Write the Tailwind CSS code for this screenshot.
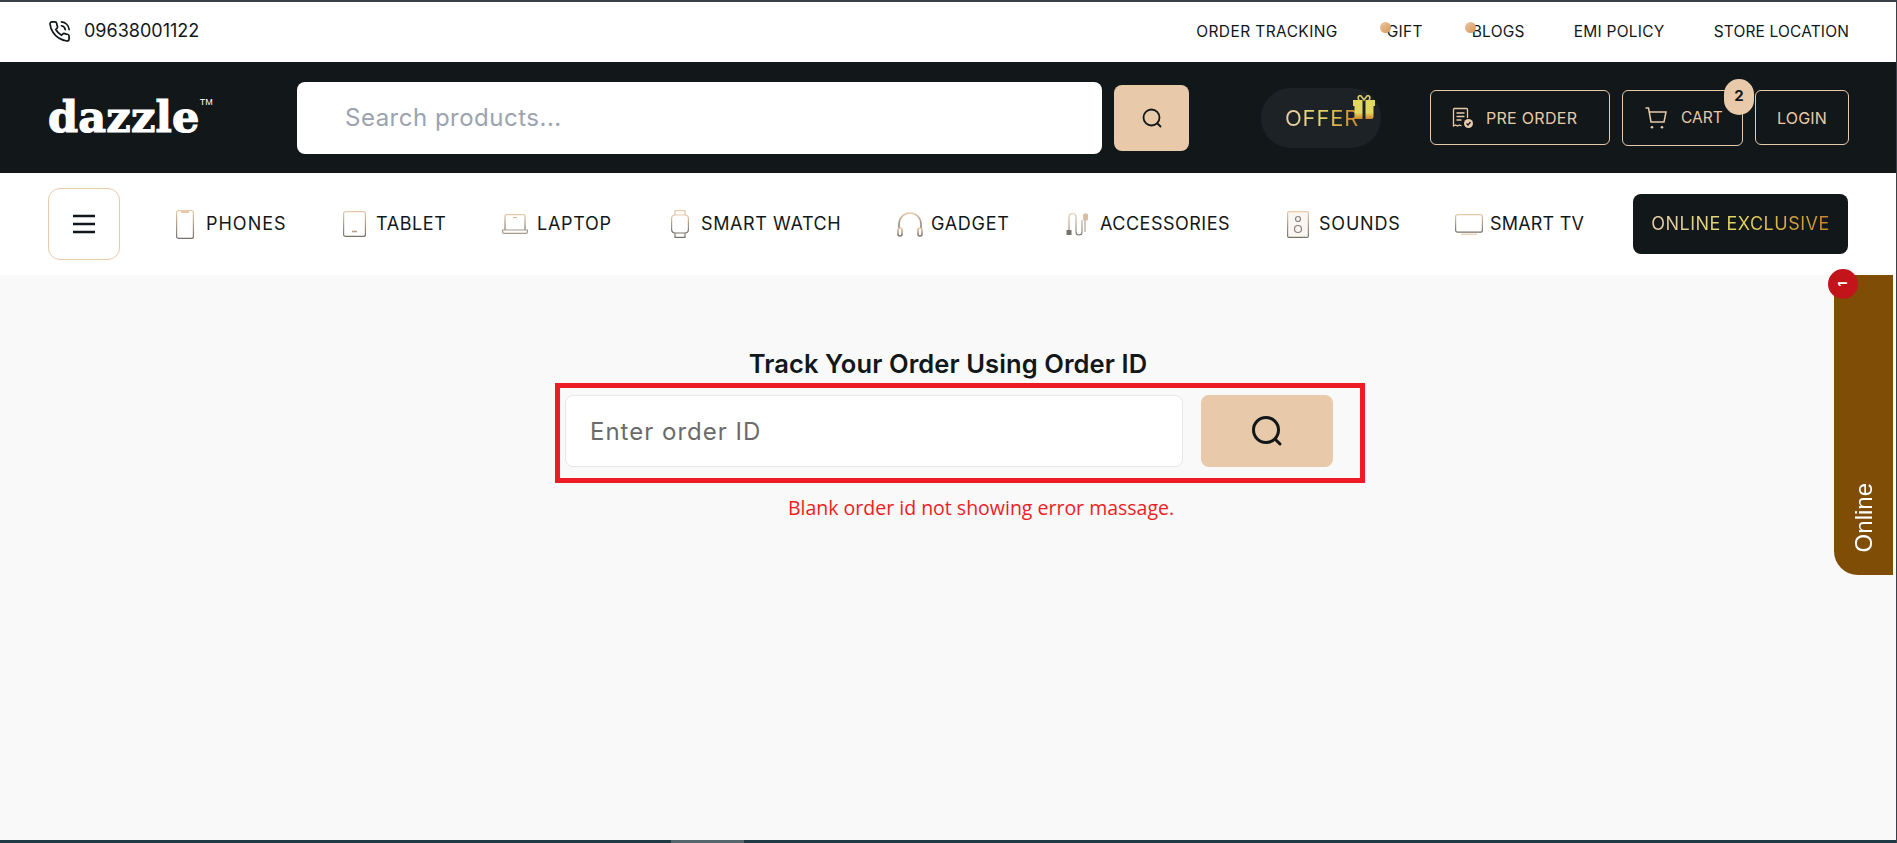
<!DOCTYPE html>
<html lang="en">
<head>
    <meta charset="UTF-8">
    <meta name="viewport" content="width=device-width, initial-scale=1.0">
    <title>Track Order</title>
    <script src="https://cdn.jsdelivr.net/npm/@tailwindcss/browser@4"></script>
</head>
<body class="font-['Inter','Liberation_Sans',sans-serif] bg-white text-[#12171a]">
    <svg class="absolute w-0 h-0" aria-hidden="true">
        <defs>
            <linearGradient id="iconGrad" x1="0" y1="0" x2="0" y2="1">
                <stop offset="0" stop-color="#e8caaa"/>
                <stop offset="1" stop-color="#77726c"/>
            </linearGradient>
            <linearGradient id="giftGrad" x1="0" y1="0" x2="0" y2="1">
                <stop offset="0" stop-color="#e3d85f"/>
                <stop offset="0.5" stop-color="#e3d85f"/>
                <stop offset="1" stop-color="#c9842c"/>
            </linearGradient>
        </defs>
    </svg>

    <div class="relative h-[843px] overflow-hidden flex flex-col border-t-2 border-r border-[#3a3f48]">
        <!-- top bar -->
        <div class="h-[60px] shrink-0 flex items-center justify-between pl-12 pr-[47px] text-[15.5px]">
            <div class="flex items-center gap-[13px]">
                <svg class="w-[23px] h-[23px] -mt-[2px]" viewBox="0 0 24 24" fill="none" stroke="#12171a" stroke-width="1.8" stroke-linecap="round" stroke-linejoin="round"><path d="M22 16.92v3a2 2 0 0 1-2.18 2 19.79 19.79 0 0 1-8.63-3.07 19.5 19.5 0 0 1-6-6 19.79 19.79 0 0 1-3.07-8.67A2 2 0 0 1 4.11 2h3a2 2 0 0 1 2 1.72 12.84 12.84 0 0 0 .7 2.81 2 2 0 0 1-.45 2.11L8.09 9.91a16 16 0 0 0 6 6l1.27-1.27a2 2 0 0 1 2.11-.45 12.84 12.84 0 0 0 2.81.7A2 2 0 0 1 22 16.92z"/><path d="M14.05 2a9 9 0 0 1 8 7.94"/><path d="M14.05 6A5 5 0 0 1 18 10"/></svg>
                <span class="text-lg -mt-[2px]">09638001122</span>
            </div>
            <div class="flex items-center gap-[49px] tracking-[0.25px]">
                <a class="tracking-[0.4px]">ORDER TRACKING</a>
                <a class="relative"><span class="absolute -left-[7px] top-[2px] w-[11px] h-[11px] rounded-full bg-linear-to-br from-[#e8caaa] to-[#d9924f]"></span>GIFT</a>
                <a class="relative"><span class="absolute -left-[7px] top-[2px] w-[11px] h-[11px] rounded-full bg-linear-to-br from-[#e8caaa] to-[#d9924f]"></span>BLOGS</a>
                <a>EMI POLICY</a>
                <a class="tracking-[0.15px]">STORE LOCATION</a>
            </div>
        </div>

        <!-- header -->
        <div class="h-[111px] shrink-0 bg-[#12171a] flex items-center pl-12">
            <div class="w-[249px] flex items-start">
                <span class="font-['DejaVu_Serif',serif] font-bold text-[43px] leading-none tracking-[0.2px] text-white [-webkit-text-stroke:1.2px_white]">dazzle</span>
                <span class="font-['Liberation_Sans',sans-serif] text-[9px] leading-none text-white mt-[2px]">TM</span>
            </div>
            <input type="text" placeholder="Search products..." class="w-[805px] h-[72px] bg-white rounded-lg pl-12 text-2xl tracking-[0.5px] outline-none placeholder:text-[#9ca3af]">
            <button class="ml-3 w-[75px] h-[66px] rounded-lg bg-[#e8caaa] flex items-center justify-center">
                <svg class="w-6 h-6" viewBox="0 0 24 24" fill="none" stroke="#12171a" stroke-width="1.8" stroke-linecap="round"><circle cx="11.5" cy="11.5" r="8"/><path d="M17.5 17.5l3 3"/></svg>
            </button>
            <div class="relative ml-[72px] w-[120px] h-[60px] rounded-full bg-[#1c2226] flex items-center pl-6">
                <span class="text-[22px] mt-[1px] tracking-[0.8px] bg-linear-to-r from-[#e8caaa] via-[#e3d85f] to-[#c9842c] bg-clip-text text-transparent">OFFER</span>
                <svg class="absolute left-[92px] top-[7px] w-[22px] h-[24px]" viewBox="0 0 22 24"><path d="M6 5C4 2 6 0 8 1l3 4 3-4c2-1 4 1 2 4" fill="none" stroke="#d9c96a" stroke-width="1.6"/><rect x="0" y="5" width="9.5" height="6" fill="#e3d85f"/><rect x="12.5" y="5" width="9.5" height="6" fill="#e3d85f"/><path d="M1.5 11h8v13h-6a2 2 0 0 1-2-2z" fill="url(#giftGrad)"/><path d="M12.5 11h8v11a2 2 0 0 1-2 2h-6z" fill="url(#giftGrad)"/></svg>
            </div>
            <button class="ml-[49px] w-[180px] h-[55px] rounded-md border border-[#e8caaa] flex items-center pl-[21px] gap-[12px] text-[#e8caaa] text-[16px] tracking-[0.3px]">
                <svg class="w-[22px] h-[22px]" viewBox="0 0 22 22" fill="none" stroke="#e8caaa" stroke-width="1.3"><path d="M15.5 11V2.5a1 1 0 0 0-1-1H2.5a1 1 0 0 0-1 1V19l2-1 2 1 2-1 2 1"/><path d="M4.5 6h8M4.5 9.5h8M4.5 13h5"/><circle cx="16.5" cy="16.5" r="4.5" fill="#e8caaa" stroke="none"/><path d="M14.5 16.5l1.5 1.5 2.5-3" stroke="#12171a"/></svg>
                <span>PRE ORDER</span>
            </button>
            <button class="relative ml-3 w-[121px] h-[56px] rounded-md border border-[#e8caaa] flex items-center pl-[22px] gap-[14px] text-[#e8caaa] text-[15.5px]">
                <svg class="w-[22px] h-[22px]" viewBox="0 0 22 22" fill="none" stroke="#e8caaa" stroke-width="1.5"><path d="M0.5 1h3l2.5 14h13l2-10H4.5"/><circle cx="7" cy="20.2" r="1.3" fill="#e8caaa" stroke="none"/><circle cx="17" cy="20.2" r="1.3" fill="#e8caaa" stroke="none"/></svg>
                <span>CART</span>
                <span class="absolute left-[101px] -top-[12px] w-[30px] h-[36px] rounded-full bg-[#e8caaa] flex items-center justify-center text-[15px] font-bold text-[#12171a]">2</span>
            </button>
            <button class="ml-3 w-[94px] h-[55px] rounded-md border border-[#e8caaa] flex items-center justify-center text-[#e8caaa] text-base tracking-[0.2px]">LOGIN</button>
        </div>

        <!-- nav -->
        <div class="h-[102px] shrink-0 flex items-center px-12 text-lg">
            <button class="w-[72px] h-[72px] rounded-xl border border-[#e8caaa] flex items-center justify-center">
                <svg class="w-[24px] h-[20px]" viewBox="0 0 24 20" stroke="#12171a" stroke-width="2.6"><path d="M1 2h22M1 10h22M1 18h22"/></svg>
            </button>
            <div class="ml-14 flex items-center">
                <a class="w-[167px] flex items-center gap-[12px]">
                    <svg class="w-[18px] h-[29px]" viewBox="0 0 18 29" fill="none" stroke="url(#iconGrad)" stroke-width="1.2"><rect x="0.6" y="0.6" width="16.8" height="27.8" rx="2"/><path d="M5 1h8v2H5z" fill="#e8caaa" stroke="none"/></svg>
                    <span class="tracking-[1px]">PHONES</span>
                </a>
                <a class="w-[159px] flex items-center gap-[10px]">
                    <svg class="w-[23px] h-[26px]" viewBox="0 0 23 26" fill="none" stroke="url(#iconGrad)" stroke-width="1.2"><rect x="0.6" y="0.6" width="21.8" height="24.8" rx="2"/><path d="M9 20.5h5" stroke="#b79f86" stroke-width="1.6"/></svg>
                    <span class="tracking-[0.6px]">TABLET</span>
                </a>
                <a class="w-[169px] flex items-center gap-[9px]">
                    <svg class="w-[26px] h-[20px]" viewBox="0 0 26 20" fill="none" stroke="url(#iconGrad)" stroke-width="1.2"><path d="M3 16V2a1.4 1.4 0 0 1 1.4-1.4h17.2A1.4 1.4 0 0 1 23 2v14"/><path d="M0.6 16h24.8v2a1.4 1.4 0 0 1-1.4 1.4H2a1.4 1.4 0 0 1-1.4-1.4z" stroke="#a69a8c"/><path d="M11 3.5h4" stroke="#d8bda0"/></svg>
                    <span class="tracking-[0.7px]">LAPTOP</span>
                </a>
                <a class="w-[226px] flex items-center gap-[12px]">
                    <svg class="w-[18px] h-[28px]" viewBox="0 0 18 28" fill="none" stroke="url(#iconGrad)" stroke-width="1.2"><rect x="0.6" y="5" width="16.8" height="18" rx="3.5"/><path d="M4 5V0.6h10V5M4 23v4.4h10V23"/></svg>
                    <span class="tracking-[0.6px]">SMART WATCH</span>
                </a>
                <a class="w-[169px] flex items-center gap-[8px]">
                    <svg class="w-[26px] h-[25px]" viewBox="0 0 26 25" fill="none" stroke="url(#iconGrad)" stroke-width="1.6"><path d="M2 17V12a11 11 0 0 1 22 0v5"/><rect x="1" y="16" width="4" height="8" rx="2"/><rect x="21" y="16" width="4" height="8" rx="2"/></svg>
                    <span class="tracking-[0.7px]">GADGET</span>
                </a>
                <a class="w-[221px] flex items-center gap-[11px]">
                    <svg class="w-[23px] h-[25px]" viewBox="0 0 23 25" fill="none" stroke="url(#iconGrad)" stroke-width="1.1"><path d="M3 18V5a3.5 3.5 0 0 1 7 0v15a3 3 0 0 0 6 0V8"/><path d="M19 8v12" stroke="#a69a8c"/><rect x="0.5" y="18" width="5" height="5" fill="#77726c" stroke="none"/><rect x="17" y="1.5" width="5" height="7" rx="1.5" fill="#d8bda0" stroke="none"/></svg>
                    <span class="tracking-[0.5px]">ACCESSORIES</span>
                </a>
                <a class="w-[168px] flex items-center gap-[10px]">
                    <svg class="w-[22px] h-[27px]" viewBox="0 0 22 27" fill="none" stroke="url(#iconGrad)" stroke-width="1.2"><rect x="0.6" y="0.6" width="20.8" height="25.8" rx="1.5" fill="#faf6f1"/><circle cx="11" cy="8" r="2.5" stroke="#8a8178"/><circle cx="11" cy="18" r="3.5" stroke="#8a8178"/></svg>
                    <span class="tracking-[0.8px]">SOUNDS</span>
                </a>
                <a class="flex items-center gap-[7px]">
                    <svg class="w-[28px] h-[21px]" viewBox="0 0 28 21" fill="none" stroke="url(#iconGrad)" stroke-width="1.2"><rect x="0.6" y="0.6" width="26.8" height="17.6" rx="2"/><path d="M6 20.2h16" stroke="#e8caaa"/></svg>
                    <span class="tracking-[0.2px]">SMART TV</span>
                </a>
            </div>
            <a class="ml-auto w-[215px] h-[60px] rounded-lg bg-[#12171a] flex items-center justify-center">
                <span class="tracking-[0.5px] bg-linear-to-r from-[#e8caaa] via-[#e3d85f] to-[#c9842c] bg-clip-text text-transparent">ONLINE EXCLUSIVE</span>
            </a>
        </div>

        <!-- main -->
        <main class="relative flex-1 bg-[#f9f9f9] flex flex-col items-center pt-[73px]">
            <h1 class="text-[25.5px] leading-8 font-semibold tracking-[0.1px]">Track Your Order Using Order ID</h1>
            <div class="relative mt-[15px] ml-[2px] w-[768px] flex gap-[18px]">
                <input type="text" placeholder="Enter order ID" class="w-[618px] h-[72px] bg-white rounded-lg border border-[#e7e7e7] pl-6 text-2xl tracking-[1px] outline-none placeholder:text-[#6b6b6b]">
                <button class="w-[132px] h-[72px] rounded-lg bg-[#e8caaa] flex items-center justify-center">
                    <svg class="w-9 h-9" viewBox="0 0 36 36" fill="none" stroke="#12171a" stroke-width="3" stroke-linecap="round"><circle cx="17" cy="17" r="12.5"/><path d="M26.5 26.5l4.5 4.5"/></svg>
                </button>
                <!-- annotation over the form -->
                <div class="absolute -left-[10px] -top-[12px] w-[810px] h-[100px] border-[5px] border-[#ed1c24]"></div>
                <p class="absolute left-[223px] top-[101px] font-['Open_Sans',sans-serif] text-[19.5px] leading-6 whitespace-nowrap text-[#ed1c24]">Blank order id not showing error massage.</p>
            </div>
        </main>

        <!-- scrollbar strip -->
        <div class="h-[3px] shrink-0 bg-[#1f3a44] pl-[671px]">
            <div class="w-[73px] h-[3px] bg-[#55666c]"></div>
        </div>

        <!-- online tab -->
        <div class="absolute left-[1834px] top-[273px] w-[59px] h-[300px] bg-[#804d06] rounded-bl-3xl flex items-end justify-center pb-[23px]">
            <span class="font-['Liberation_Sans',sans-serif] text-2xl leading-none text-white [writing-mode:vertical-rl] rotate-180">Online</span>
            <span class="absolute -left-[6px] -top-[6px] w-[30px] h-[30px] rounded-full bg-[#c2141a] flex items-center justify-center">
                <span class="text-xs font-bold text-white -rotate-90">1</span>
            </span>
        </div>
    </div>
</body>
</html>
